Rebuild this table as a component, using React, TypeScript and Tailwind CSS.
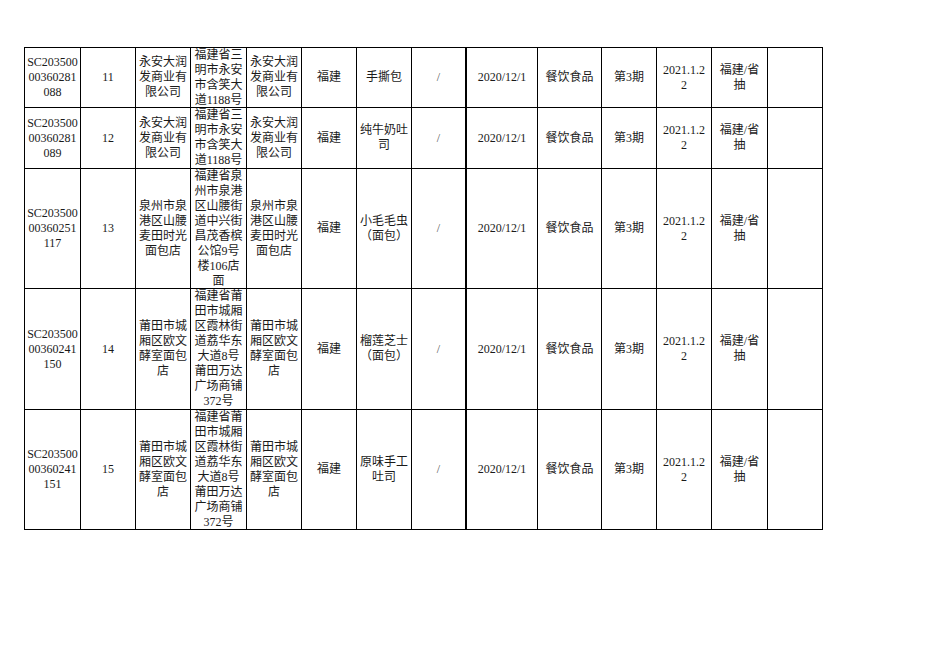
const widths = [56, 55, 55, 56, 55, 55, 55, 55, 71, 64, 55, 55, 56, 55];
const heights = [60, 61, 120, 121, 120];

const yongan = ["永安大润", "发商业有", "限公司"];
const yonganAddr = ["福建省三", "明市永安", "市含笑大", "道1188号"];
const quanzhou = ["泉州市泉", "港区山腰", "麦田时光", "面包店"];
const quanzhouAddr = ["福建省泉", "州市泉港", "区山腰街", "道中兴街", "昌茂香槟", "公馆9号", "楼106店", "面"];
const putian = ["莆田市城", "厢区欧文", "酵室面包", "店"];
const putianAddr = ["福建省莆", "田市城厢", "区霞林街", "道荔华东", "大道8号", "莆田万达", "广场商铺", "372号"];

const tail = [["/"], ["2020/12/1"], ["餐饮食品"], ["第3期"], ["2021.1.2", "2"], ["福建/省", "抽"], []];

const rows: string[][][] = [
  [["SC203500", "00360281", "088"], ["11"], yongan, yonganAddr, yongan, ["福建"], ["手撕包"], ...tail],
  [["SC203500", "00360281", "089"], ["12"], yongan, yonganAddr, yongan, ["福建"], ["纯牛奶吐", "司"], ...tail],
  [["SC203500", "00360251", "117"], ["13"], quanzhou, quanzhouAddr, quanzhou, ["福建"], ["小毛毛虫", "（面包）"], ...tail],
  [["SC203500", "00360241", "150"], ["14"], putian, putianAddr, putian, ["福建"], ["榴莲芝士", "（面包）"], ...tail],
  [["SC203500", "00360241", "151"], ["15"], putian, putianAddr, putian, ["福建"], ["原味手工", "吐司"], ...tail],
];

export default function App() {
  return (
    <div className="h-[662px] w-[936px] bg-white pl-[24px] pt-[47px] font-['Liberation_Serif','Noto_Sans_CJK_SC',serif] text-[12px] leading-[15px] text-[#1a1a1a]">
      <div className="flex w-max flex-col border-l border-t border-black">
        {rows.map((row, r) => (
          <div key={r} className="flex" style={{ height: heights[r] }}>
            {row.map((lines, c) => (
              <div
                key={c}
                className={
                  "flex flex-col items-center justify-center whitespace-nowrap border-b border-black text-center " +
                  (c === 7 ? "border-r-2" : "border-r")
                }
                style={{ width: widths[c] }}
              >
                {lines.map((t, i) => (
                  <span key={i} className={t === "/" ? "text-[#555]" : ""}>
                    {t}
                  </span>
                ))}
              </div>
            ))}
          </div>
        ))}
      </div>
    </div>
  );
}
